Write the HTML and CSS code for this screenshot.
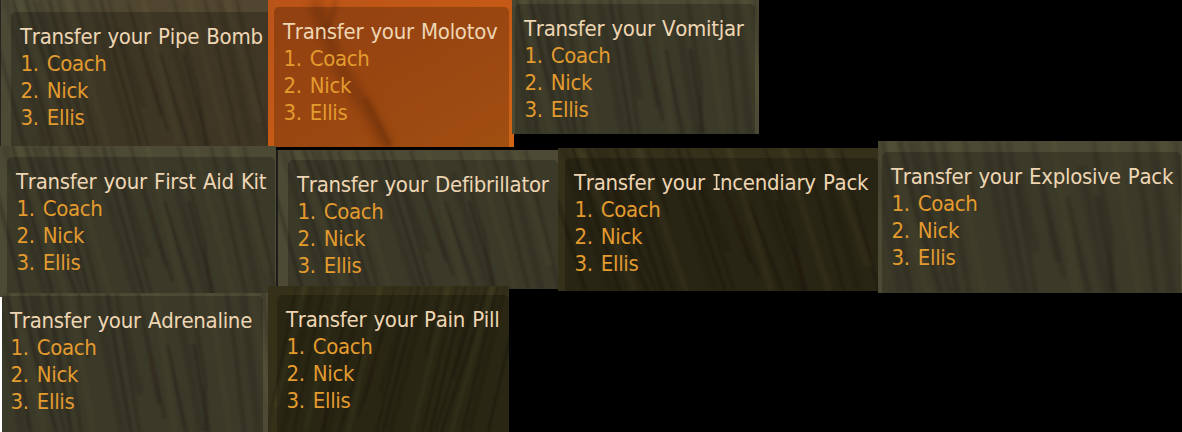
FILE: index.html
```html
<!DOCTYPE html>
<html lang="en">
<head>
<meta charset="utf-8">
<title>Transfer menus</title>
<link rel="stylesheet" href="styles.css">
</head>
<body>
<svg class="defs" width="0" height="0" aria-hidden="true">
  <defs>
    <filter id="soft" x="-5%" y="-5%" width="110%" height="110%"><feGaussianBlur stdDeviation="1.6 1"/></filter>
    <symbol id="grain" viewBox="0 0 300 150" preserveAspectRatio="none">
      <g filter="url(#soft)" fill="none" stroke="#151004">
        <path stroke-width="3" opacity=".26" d="M-12 15L26 150M14 0L58 150M28 0L50 65L84 150M54 0L98 150M112 0L126 50L157 150M178 55L211 150M205 55L233 150"/>
        <path stroke-width="2" opacity=".27" d="M36 0L92 150M65 0L108 150M84 0L103 70M121 0L165 150M142 0L180 120M150 25L188 135M194 0L222 95L230 150M229 0L246 60L268 150M265 0L301 150"/>
        <path stroke-width="7" opacity=".1" d="M5 0L50 150M43 0L69 95M101 0L148 150M132 30L160 110M187 25L226 150M245 0L282 150"/>
        <path stroke="#807b52" stroke-width="6" opacity=".1" d="M20 0L72 150M75 0L120 150M160 0L200 150M212 0L254 150M254 0L290 125"/>
      </g>
    </symbol>
  </defs>
</svg>
<main class="board">
  <div class="row row-top">
    <section class="panel pipe"><svg class="texture"><use href="#grain"/></svg>
      <div class="menu"><h2>Transfer your Pipe Bomb</h2><ol><li>1. Coach</li><li>2. Nick</li><li>3. Ellis</li></ol></div></section>
    <section class="panel molotov"><svg class="texture" viewBox="0 0 246 147" preserveAspectRatio="none"><path class="flame" d="M46 0L72 68L103 116L120 147"/><path class="flame thin" d="M68 0Q64 24 50 38M97 98L122 147"/></svg>
      <div class="menu"><h2>Transfer your Molotov</h2><ol><li>1. Coach</li><li>2. Nick</li><li>3. Ellis</li></ol></div></section>
    <section class="panel vomit"><svg class="texture steep"><use href="#grain"/></svg>
      <div class="menu"><h2>Transfer your Vomitjar</h2><ol><li>1. Coach</li><li>2. Nick</li><li>3. Ellis</li></ol></div></section>
  </div>
  <div class="row row-middle">
    <section class="panel aid"><svg class="texture"><use href="#grain"/></svg>
      <div class="menu"><h2>Transfer your First Aid Kit</h2><ol><li>1. Coach</li><li>2. Nick</li><li>3. Ellis</li></ol></div></section>
    <section class="panel defib"><svg class="texture"><use href="#grain"/></svg>
      <div class="menu"><h2>Transfer your Defibrillator</h2><ol><li>1. Coach</li><li>2. Nick</li><li>3. Ellis</li></ol></div></section>
    <section class="panel incendiary"><svg class="texture"><use href="#grain"/></svg>
      <div class="menu"><h2>Transfer your <span class="slab">I</span>ncendiary Pack</h2><ol><li>1. Coach</li><li>2. Nick</li><li>3. Ellis</li></ol></div></section>
    <section class="panel explosive"><svg class="texture steep"><use href="#grain"/></svg>
      <div class="menu"><h2>Transfer your Explosive Pack</h2><ol><li>1. Coach</li><li>2. Nick</li><li>3. Ellis</li></ol></div></section>
  </div>
  <div class="row row-bottom">
    <section class="panel adrenaline"><svg class="texture steep"><use href="#grain"/></svg>
      <div class="menu"><h2>Transfer your Adrenaline</h2><ol><li>1. Coach</li><li>2. Nick</li><li>3. Ellis</li></ol></div></section>
    <section class="panel pill"><svg class="texture mirrored"><use href="#grain"/></svg>
      <div class="menu"><h2>Transfer your Pain Pill</h2><ol><li>1. Coach</li><li>2. Nick</li><li>3. Ellis</li></ol></div></section>
  </div>
</main>
</body>
</html>
```
FILE: styles.css
```css
* { box-sizing: border-box; }
body { margin: 0; background: #000; }
.defs { display: block; }
.board {
  width: 1182px;
  height: 432px;
  overflow: hidden;
  background: #000;
  font-family: "DejaVu Sans Condensed", "DejaVu Sans", sans-serif;
  font-stretch: condensed;
}
.row { display: flex; align-items: flex-start; }
.row-top { height: 141px; }
.row-middle { height: 145px; }
.row-bottom { height: 146px; background: linear-gradient(#fff, #fff) 0 11px / 2px 100% no-repeat; }

.panel { position: relative; display: grid; flex: none; overflow: hidden; background: #4c4934; }
/* Wall texture sits behind the whole panel, including its margin */
.texture { position: absolute; inset: 0; display: block; width: 100%; height: 100%; }
.steep { transform: skewX(-9deg) scaleX(1.15); }
.mirrored { transform: scaleX(-1); }
.menu {
  position: relative;
  min-width: 0;
  padding: 11px 0 0 9px;
  border-radius: 5px 5px 0 0;
  background: rgba(0, 0, 0, .22);
  white-space: nowrap;
}
h2, ol { margin: 0; padding: 0; font-size: 22px; font-weight: 400; line-height: 27px; font-kerning: none; }
h2 { color: #eed6b4; letter-spacing: -.28px; word-spacing: 1.2px; }
ol { list-style: none; padding-left: .6px; color: #e39b2e; letter-spacing: -.36px; word-spacing: 2.2px; }
.slab { display: inline-block; margin: 0 -2.5px; font-family: "DejaVu Sans Mono", monospace; transform: scaleX(.7); }

.pipe { width: 268px; height: 146px; padding: 12px 0 0 10px; border-left: 1px solid #25241d; background: linear-gradient(100deg, #4b4a36, #50462f 45%, #524630); }
.pipe .menu { border-top-right-radius: 0; }
.molotov { width: 246px; height: 147px; padding: 7px 5px 0 6px; background: linear-gradient(150deg, #b95317, #c55a16 50%, #d06516); }
.vomit { width: 247px; height: 134px; margin-left: -2px; padding: 4px 4px 0 3px; }
.aid { width: 276px; height: 151px; margin-top: 5px; padding: 11px 1px 4px 7px; }
.defib { width: 282px; height: 139px; margin-top: 9px; padding: 10px 0 0 10px; border-left: 2px solid #1c1c1c; }
.incendiary { width: 320px; height: 143px; margin-top: 7px; padding: 10px 0 0 7px; background: #35301a; }
.explosive { width: 304px; height: 152px; padding: 11px 1px 0 4px; }
.adrenaline { width: 266px; height: 139px; margin: 7px 0 0 2px; padding: 3px 5px 0 0; }
.adrenaline .menu { padding-left: 8px; border-top-left-radius: 0; }
.pill { width: 241px; height: 146px; padding: 9px 0 0 9px; background: #353119; }

.flame { fill: none; stroke: #612807; stroke-width: 13; opacity: .3; filter: blur(5px); }
.thin { stroke-width: 4; filter: blur(2px); }
```
